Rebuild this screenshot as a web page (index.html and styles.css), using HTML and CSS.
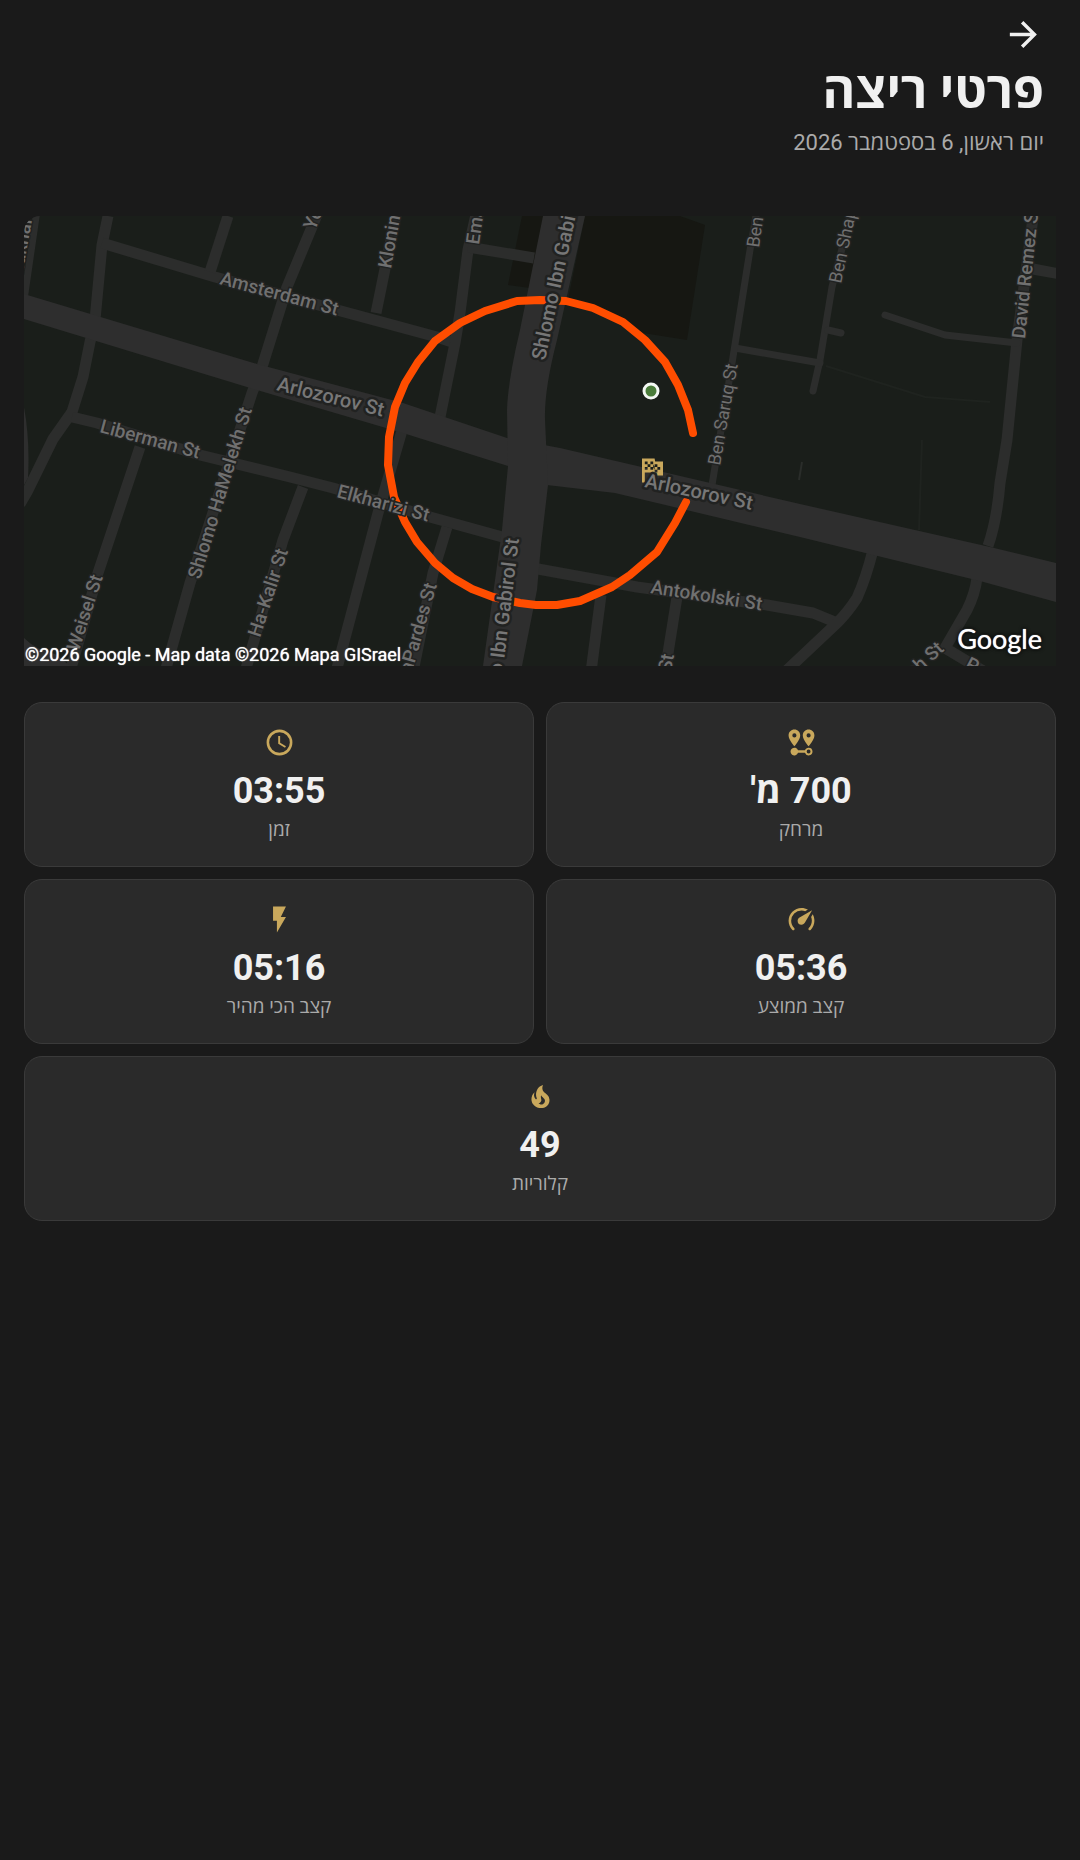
FILE: index.html
```html
<!DOCTYPE html>
<html lang="he" dir="rtl">
<head>
<meta charset="utf-8">
<meta name="viewport" content="width=device-width, initial-scale=1">
<title>פרטי ריצה</title>
<link rel="stylesheet" href="styles.css">
</head>
<body>
<header class="header">
  <button class="back" type="button" aria-label="חזרה">
    <svg viewBox="0 0 24 24" aria-hidden="true"><path d="M4 11v2h12l-5.5 5.5 1.42 1.42L19.84 12l-7.92-7.92L10.500 5.500 16 11H4z"/></svg>
  </button>
  <h1 class="title">פרטי ריצה</h1>
  <p class="date">יום ראשון, 6 בספטמבר 2026</p>
</header>
<main class="content">
  <section class="map" dir="ltr" aria-label="Route map">
    <svg class="map-canvas" viewBox="24 216 1032 450" preserveAspectRatio="xMidYMid slice">
      <g class="block">
        <path d="M585 216H680L705 225L687 340L643 333L568 300Z"/>
        <path d="M522 216H545L530 288L508 285Z"/>
      </g>
      <g class="trail">
        <path d="M826 366L925 397L990 402"/>
        <path d="M922 440L919 530"/>
        <path class="trail-lit" d="M802 462L799 480"/>
      </g>
      <g class="street">
        <path d="M108 216L102 245L95 320L90 342L83 377L72 412L53 439L27 492L20 504"/>
        <path d="M102 243L215 277L437 337L455 343"/>
        <path d="M228 216L210 272"/>
        <path d="M319 210L287 287L262 367L252 393L190 583L165 672"/>
        <path d="M72 417L97 423L200 455L290 477L333 488L430 517L506 538"/>
        <path d="M140 447L98 573L70 672"/>
        <path d="M303 487L283 540L245 672"/>
        <path d="M403 427L378 513L336 672"/>
        <path d="M447 527L433 573L413 672"/>
        <path d="M477 210L468 250L460 313L455 343L440 417"/>
        <path d="M468 247L534 258"/>
        <path d="M397 210L376 313"/>
        <path d="M538 569L560 573L637 587L767 605L813 613L835 622"/>
        <path d="M601 595L591 672"/>
        <path d="M677 597L665 672"/>
        <path d="M873 550Q866 578 857 598Q848 612 837 623L785 672"/>
        <path d="M977 578Q975 594 967 610L945 648L985 672"/>
        <path d="M1034 210L1017 340L1007 440L1000 483Q997 520 988 546"/>
        <path d="M1033 269L1060 274"/>
      </g>
      <g class="lane">
        <path d="M37 210L24 300"/>
        <path d="M885 315L945 335L1017 343"/>
        <path d="M852 210L832 287L820 360L813 391"/>
        <path d="M828 330L841 333"/>
        <path d="M735 348L820 363"/>
        <path d="M757 210L750 250L733 357L712 485"/>
      </g>
      <path class="avenue" d="M24 407Q30 440 28 478L24 485ZM24 638Q36 650 55 654L78 672H24Z"/>
      <path class="avenue" d="M24 294L257 364L403 403L507 438L560 448L800 504L990 547L1056 563V602L980 581L800 537L615 493L547 485L508 466L403 433L257 390L24 319Z"/>
      <path class="avenue" d="M543 216H585L557 340Q544 390 545 420L548 485L541 545L537 590L522 666H483L502 530L508 466L507 410Q508 380 520 330Z"/>
      <polyline class="route" points="693,433 688,410 678,385 665,362 645,340 623,322 593,308 566,301 540,300 517,301 485,311 460,323 435,341 418,362 405,383 395,407 389,437 388,465 394,497 405,522 417,542 435,563 453,578 472,589 493,597 520,603 536,605 557,605 580,601 612,587 630,575 657,552 675,523 686,502"/>
      <path class="gold" transform="translate(635 453) scale(1.4)" d="M14.400 6H20V16H13L12.600 14H7V21H5V4H14L14.400 6M14 14H16V12H18V10H16V8H14V10L13 8V6H11V8H9V6H7V8H9V10H7V12H9V10H11V12H13V10L14 12V14M11 10V8H13V10H11M14 10H16V12H14V10Z"/>
      <circle class="start-dot" cx="651" cy="391" r="7"/>
      <g class="label">
        <text transform="translate(219 284) rotate(15)">Amsterdam St</text>
        <text transform="translate(99 432) rotate(15)">Liberman St</text>
        <text transform="translate(336 497) rotate(15)">Elkharizi St</text>
        <text transform="translate(650 593) rotate(9)">Antokolski St</text>
        <text transform="translate(200 580) rotate(-73)">Shlomo HaMelekh St</text>
        <text class="end" transform="translate(103 577) rotate(-72)">Weisel St</text>
        <text transform="translate(260 638) rotate(-72)">Ha-Kalir St</text>
        <text class="end" transform="translate(437 585) rotate(-74)">HaPardes St</text>
        <text transform="translate(315 231) rotate(-68)">Yehuda</text>
        <text transform="translate(391 269) rotate(-80)">Klonimus</text>
        <text transform="translate(479 245) rotate(-82)">Emanuel</text>
        <text transform="translate(1025 339) rotate(-84)">David Remez St</text>
        <text class="end" transform="translate(674 655) rotate(-80)">Bloch St</text>
        <text class="end" transform="translate(945 650) rotate(-42)">Bloch St</text>
        <text transform="translate(964 668) rotate(28)">P</text>
        <text class="end" transform="translate(32 220) rotate(-80)">Makhal</text>
      </g>
      <g class="label label-small">
        <text transform="translate(759 248) rotate(-82)">Ben</text>
        <text transform="translate(720 466) rotate(-80)">Ben Saruq St</text>
        <text transform="translate(841 284) rotate(-78)">Ben Shaprut</text>
      </g>
      <g class="label label-major">
        <text transform="translate(276 390) rotate(14)">Arlozorov St</text>
        <text transform="translate(644 487) rotate(12)">Arlozorov St</text>
        <text transform="translate(545 361) rotate(-78)">Shlomo Ibn Gabirol St</text>
        <text class="end" transform="translate(519 539) rotate(-83)">Shlomo Ibn Gabirol St</text>
      </g>
    </svg>
    <span class="copyright">©2026 Google - Map data ©2026 Mapa GISrael</span>
    <span class="brand">Google</span>
  </section>
  <section class="stats">
    <article class="card">
      <svg class="icon" viewBox="0 0 24 24" aria-hidden="true"><path fill-rule="evenodd" d="M6.500 2C4 2 2 4 2 6.500C2 9.870 6.500 14.860 6.500 14.860S11 9.870 11 6.500C11 4 9 2 6.500 2ZM6.500 8.110A1.610 1.610 0 1 1 6.500 4.890A1.610 1.610 0 1 1 6.500 8.110ZM17.500 2C15 2 13 4 13 6.500C13 9.870 17.500 14.860 17.500 14.860S22 9.870 22 6.500C22 4 20 2 17.500 2ZM17.500 8.110A1.610 1.610 0 1 1 17.500 4.890A1.610 1.610 0 1 1 17.500 8.110ZM17.500 16C16.230 16 15.100 16.800 14.680 18H9.320A3 3 0 1 0 9.320 20H14.680A3 3 0 1 0 17.500 16ZM17.500 20.500A1.500 1.500 0 1 1 17.500 17.500A1.500 1.500 0 1 1 17.500 20.500Z"/></svg>
      <strong class="value">700 מ'</strong>
      <span class="caption">מרחק</span>
    </article>
    <article class="card">
      <svg class="icon" viewBox="0 0 24 24" aria-hidden="true"><path d="M12 20A8 8 0 0 0 20 12A8 8 0 0 0 12 4A8 8 0 0 0 4 12A8 8 0 0 0 12 20M12 2A10 10 0 0 1 22 12A10 10 0 0 1 12 22C6.470 22 2 17.500 2 12A10 10 0 0 1 12 2M12.500 7V12.250L17 14.920L16.250 16.150L11 13V7H12.500Z"/></svg>
      <strong class="value">03:55</strong>
      <span class="caption">זמן</span>
    </article>
    <article class="card">
      <svg class="icon" viewBox="0 0 24 24" aria-hidden="true"><path d="M12 16A3 3 0 0 1 9 13C9 11.880 9.610 10.900 10.500 10.390L20.210 4.770L14.680 14.350C14.180 15.330 13.170 16 12 16M12 3C13.810 3 15.500 3.500 16.970 4.320L14.870 5.530C14 5.190 13 5 12 5A8 8 0 0 0 4 13C4 15.210 4.890 17.210 6.340 18.650H6.350C6.740 19.040 6.740 19.670 6.350 20.060C5.960 20.450 5.320 20.450 4.930 20.070C3.120 18.260 2 15.760 2 13A10 10 0 0 1 12 3M22 13C22 15.760 20.880 18.260 19.070 20.070C18.680 20.450 18.050 20.450 17.660 20.060C17.270 19.670 17.270 19.040 17.660 18.650C19.110 17.200 20 15.210 20 13C20 12 19.810 11 19.460 10.100L20.670 8C21.500 9.500 22 11.180 22 13Z"/></svg>
      <strong class="value">05:36</strong>
      <span class="caption">קצב ממוצע</span>
    </article>
    <article class="card">
      <svg class="icon" viewBox="0 0 24 24" aria-hidden="true"><path d="M7 2V13H10V22L17 10H13L17 2H7Z"/></svg>
      <strong class="value">05:16</strong>
      <span class="caption">קצב הכי מהיר</span>
    </article>
    <article class="card card-wide">
      <svg class="icon" viewBox="0 0 24 24" aria-hidden="true"><path d="M17.660 11.200C17.430 10.900 17.150 10.640 16.890 10.380C16.220 9.780 15.460 9.350 14.820 8.720C13.330 7.260 13 4.850 13.950 3C13 3.230 12.170 3.750 11.460 4.320C8.870 6.400 7.850 10.070 9.070 13.220C9.110 13.320 9.150 13.420 9.150 13.550C9.150 13.770 9 13.970 8.800 14.050C8.570 14.150 8.330 14.090 8.140 13.930C8.080 13.880 8.040 13.830 8 13.760C6.870 12.330 6.690 10.280 7.450 8.640C5.780 10 4.870 12.300 5 14.470C5.060 14.970 5.120 15.470 5.290 15.970C5.430 16.570 5.700 17.170 6 17.700C7.080 19.430 8.950 20.670 10.960 20.920C13.100 21.190 15.390 20.800 17.030 19.320C18.860 17.660 19.500 15 18.560 12.720L18.430 12.460C18.220 12 17.660 11.200 17.660 11.200M14.500 17.500C14.220 17.740 13.760 18 13.400 18.100C12.280 18.500 11.160 17.940 10.500 17.280C11.690 17 12.400 16.120 12.610 15.230C12.780 14.430 12.460 13.770 12.330 13C12.210 12.260 12.230 11.630 12.500 10.940C12.690 11.320 12.890 11.700 13.130 12C13.900 13 15.110 13.440 15.370 14.800C15.410 14.940 15.430 15.080 15.430 15.230C15.460 16.050 15.100 16.950 14.500 17.500Z"/></svg>
      <strong class="value">49</strong>
      <span class="caption">קלוריות</span>
    </article>
  </section>
</main>
</body>
</html>
```
FILE: styles.css
```css
* { box-sizing: border-box; }

body {
  margin: 0;
  min-height: 100vh;
  background: #1a1a1a;
  color: #f0f0f0;
  font-family: Roboto, "Open Sans", sans-serif;
}

.header {
  display: flex;
  flex-direction: column;
  align-items: flex-start;
  padding: 14px 36px 0;
}

.back {
  width: 41px;
  height: 41px;
  padding: 0;
  border: 0;
  background: none;
  color: inherit;
  cursor: pointer;
}

.back svg {
  display: block;
  width: 100%;
  height: 100%;
  fill: currentColor;
}

.title {
  margin: 0;
  font-size: 50px;
  line-height: 72px;
  font-weight: 700;
}

.date {
  margin: 0;
  color: #aaa;
  font-size: 22px;
  line-height: 32px;
}

.content {
  display: flex;
  flex-direction: column;
  gap: 36px;
  padding: 57px 24px 24px;
}

.map {
  position: relative;
  height: 450px;
  overflow: hidden;
  border-radius: 16px 0 0 0;
  background: #1a1e1a;
}

.map-canvas {
  display: block;
  width: 100%;
  height: 100%;
}

.block { fill: #161712; }

.trail {
  fill: none;
  stroke: #1f231f;
  stroke-width: 2;
}

.trail-lit { stroke: #2a2d2a; }

.street,
.lane {
  fill: none;
  stroke: #2c2d2c;
  stroke-width: 11;
  stroke-linejoin: round;
}

.lane {
  stroke-width: 7;
  stroke-linecap: round;
}

.avenue { fill: #2e2e2e; }

.route {
  fill: none;
  stroke: #ff4d00;
  stroke-width: 8;
  stroke-linecap: round;
  stroke-linejoin: round;
}

.gold { fill: #c9a85c; }

.start-dot {
  fill: #4a7c3a;
  stroke: #f4f8f4;
  stroke-width: 3;
}

.label {
  fill: #707070;
  stroke: #212221;
  stroke-width: 3;
  stroke-linejoin: round;
  paint-order: stroke;
  font-size: 19px;
  font-weight: 500;
}

.label-small {
  font-size: 18px;
  font-weight: 400;
}

.label-major {
  fill: #777;
  stroke-width: 5;
  font-size: 20px;
}

.end { text-anchor: end; }

.copyright,
.brand {
  position: absolute;
  color: #fff;
  white-space: nowrap;
}

.copyright {
  left: 1px;
  bottom: 0;
  font-size: 18px;
  line-height: 22px;
  text-shadow: 0 0 1px #fff;
}

.brand {
  right: 14px;
  bottom: 10px;
  font-family: Lato, sans-serif;
  font-size: 27px;
  line-height: 34px;
  text-shadow: 0 0 1px #fff, 0 0 4px #000, 0 0 3px #000;
}

.stats {
  display: grid;
  grid-template-columns: 1fr 1fr;
  gap: 12px;
}

.card {
  display: flex;
  flex-direction: column;
  align-items: center;
  padding: 24px;
  border: 1px solid #3a3a3a;
  border-radius: 18px;
  background: #2a2a2a;
}

.card-wide { grid-column: 1 / -1; }

.icon {
  width: 31px;
  height: 31px;
  margin-bottom: 9px;
  fill: #c9a85c;
}

.value {
  margin-bottom: 3px;
  font-size: 36px;
  line-height: 48px;
  font-weight: 700;
}

.caption {
  color: #aaa;
  font-size: 19px;
  line-height: 24px;
}
```
